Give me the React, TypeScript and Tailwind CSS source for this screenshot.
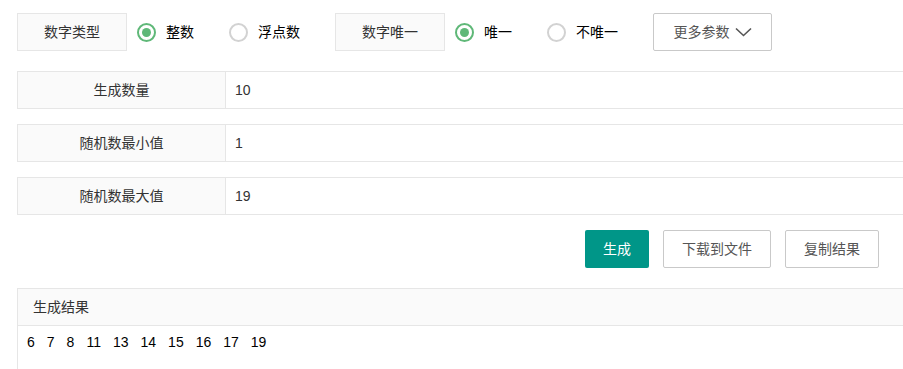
import React from "react";

const font = "font-['Liberation_Sans','Noto_Sans_CJK_SC',sans-serif]";

const Radio: React.FC<{ label: string; checked?: boolean }> = ({ label, checked }) => (
  <div className="flex items-center mr-[35px]">
    <span
      className={`w-[19px] h-[19px] rounded-full border-2 flex items-center justify-center ${
        checked ? "border-[#5fb878]" : "border-[#d2d2d2]"
      }`}
    >
      {checked && <span className="w-[9px] h-[9px] rounded-full bg-[#5fb878]" />}
    </span>
    <span className="ml-[10px] text-[14px] text-[#000]">{label}</span>
  </div>
);

const FieldRow: React.FC<{ label: string; value: string }> = ({ label, value }) => (
  <div className="flex h-[38px] border border-[#e6e6e6]">
    <div className="w-[208px] shrink-0 bg-[#fafafa] border-r border-[#e6e6e6] flex items-center justify-center text-[14px] text-[#333]">
      {label}
    </div>
    <div className="flex-1 flex items-center pl-[9px] text-[14px] text-[#333]">{value}</div>
  </div>
);

const LabelBox: React.FC<{ text: string }> = ({ text }) => (
  <div className="w-[110px] h-[38px] bg-[#fafafa] border border-[#e6e6e6] flex items-center justify-center text-[14px] text-[#333] mr-[10px]">
    {text}
  </div>
);

export default function App() {
  const nums = ["6", "7", "8", "11", "13", "14", "15", "16", "17", "19"];
  return (
    <div className={`w-[903px] h-[369px] overflow-hidden bg-white ${font}`}>
      <div className="w-[960px] ml-[17px] pt-[13px]">
        <div className="flex items-center">
          <LabelBox text="数字类型" />
          <Radio label="整数" checked />
          <Radio label="浮点数" />
          <LabelBox text="数字唯一" />
          <Radio label="唯一" checked />
          <Radio label="不唯一" />
          <button className="h-[38px] w-[119px] border border-[#c9c9c9] rounded-[2px] bg-white flex items-center justify-center text-[14px] text-[#555]">
            更多参数
            <svg width="17" height="10" viewBox="0 0 17 10" className="ml-[5px]">
              <path d="M1 1.5 L8.5 8.5 L16 1.5" fill="none" stroke="#555" strokeWidth="1.6" />
            </svg>
          </button>
        </div>

        <div className="mt-[20px] flex flex-col gap-[15px]">
          <FieldRow label="生成数量" value="10" />
          <FieldRow label="随机数最小值" value="1" />
          <FieldRow label="随机数最大值" value="19" />
        </div>

        <div className="mt-[15px] flex w-[862px] justify-end gap-[14px]">
          <button className="h-[38px] w-[64px] bg-[#009688] text-white text-[14px] rounded-[2px]">生成</button>
          <button className="h-[38px] w-[108px] border border-[#c9c9c9] bg-white text-[#555] text-[14px] rounded-[2px]">
            下载到文件
          </button>
          <button className="h-[38px] w-[94px] border border-[#c9c9c9] bg-white text-[#555] text-[14px] rounded-[2px]">
            复制结果
          </button>
        </div>

        <div className="mt-[20px] border border-[#e6e6e6] h-[120px]">
          <div className="h-[37px] bg-[#fafafa] border-b border-[#e6e6e6] flex items-center pl-[15px] text-[14px] text-[#333]">
            生成结果
          </div>
          <div className="flex gap-[12px] pl-[9px] pt-[6px] text-[14px] text-[#000]">
            {nums.map((n, i) => (
              <span key={i}>{n}</span>
            ))}
          </div>
        </div>
      </div>
    </div>
  );
}
